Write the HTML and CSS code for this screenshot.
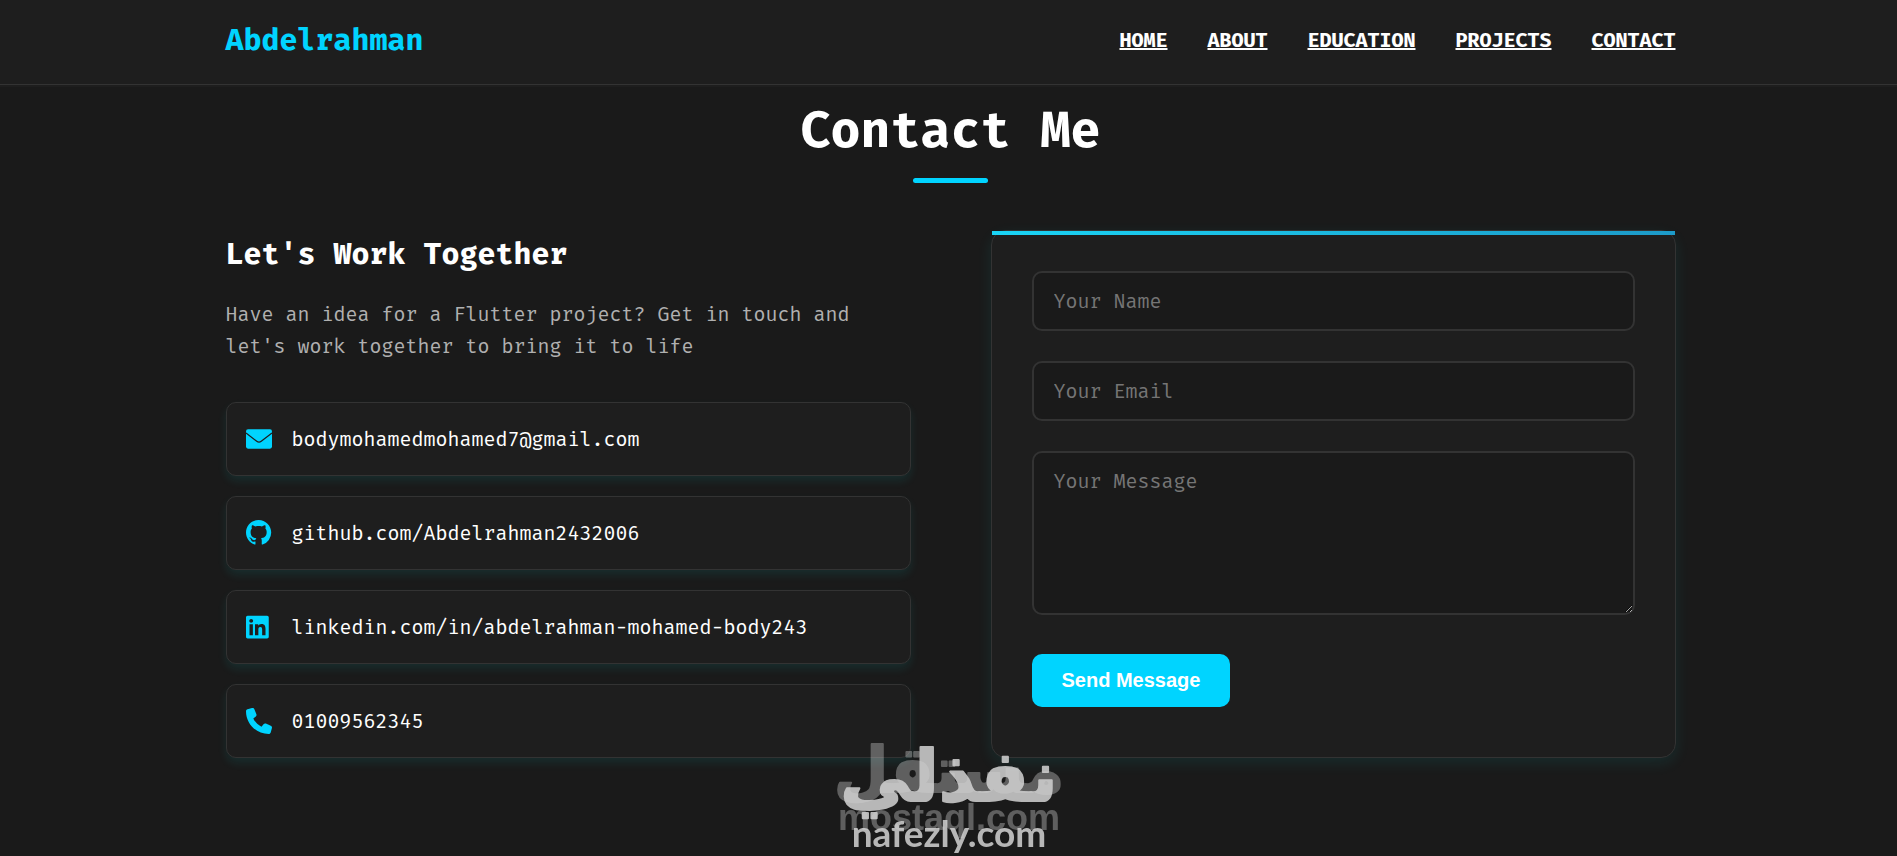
FILE: index.html
```html
<!DOCTYPE html>
<html lang="en">

<head>
	<meta charset="UTF-8">
	<meta name="viewport" content="width=device-width, initial-scale=1.0">
	<title>Abdelrahman | Contact</title>
	<link rel="stylesheet" href="styles.css">
</head>

<body>
	<!-- Header -->
	<header class="header">
		<div class="container header-content">
			<a href="#home" class="logo">Abdelrahman</a>
			<nav>
				<ul class="nav-links">
					<li><a href="#home">HOME</a></li>
					<li><a href="#about">ABOUT</a></li>
					<li><a href="#education">EDUCATION</a></li>
					<li><a href="#projects">PROJECTS</a></li>
					<li><a href="#contact">CONTACT</a></li>
				</ul>
			</nav>
		</div>
	</header>

	<!-- Contact Section -->
	<main>
		<section id="contact" class="container contact">
			<h2 class="section-title">Contact Me</h2>
			<div class="contact-content">
				<div class="contact-info">
					<h3>Let's Work Together</h3>
					<p>Have an idea for a Flutter project? Get in touch and let's work together to bring it to life</p>
					<div class="contact-items">
						<a class="contact-item" href="mailto:bodymohamedmohamed7@gmail.com">
							<svg class="icon" viewBox="0 0 512 512" aria-hidden="true"><rect x="0" y="66" width="512" height="380" rx="40"/><path class="flap" d="M0 136L212 302Q256 336 300 302L512 136"/></svg>
							<span>bodymohamedmohamed7@gmail.com</span>
						</a>
						<a class="contact-item" href="https://github.com/Abdelrahman2432006">
							<svg class="icon" viewBox="0 0 16.500 16.500" aria-hidden="true"><path d="M8 0C3.580 0 0 3.580 0 8c0 3.540 2.290 6.530 5.470 7.590.4.070.55-.17.55-.38 0-.19-.01-.82-.01-1.490-2.010.37-2.530-.49-2.690-.94-.09-.23-.48-.94-.82-1.130-.28-.15-.68-.52-.01-.53.63-.01 1.080.58 1.230.82.72 1.210 1.870.87 2.330.66.07-.52.28-.87.51-1.070-1.780-.2-3.640-.89-3.640-3.950 0-.87.31-1.590.82-2.150-.08-.2-.36-1.020.08-2.120 0 0 .67-.21 2.200.82.64-.18 1.320-.27 2-.27s1.360.09 2 .27c1.530-1.040 2.200-.82 2.200-.82.44 1.100.16 1.920.08 2.120.51.56.82 1.270.82 2.150 0 3.070-1.870 3.750-3.650 3.950.29.25.54.73.54 1.480 0 1.070-.01 1.930-.01 2.200 0 .21.15.46.55.38A8.010 8.010 0 0 0 16 8c0-4.420-3.580-8-8-8z"/></svg>
							<span>github.com/Abdelrahman2432006</span>
						</a>
						<a class="contact-item" href="https://linkedin.com/in/abdelrahman-mohamed-body243">
							<svg class="icon" viewBox="0 0 448 512" preserveAspectRatio="xMinYMid meet" aria-hidden="true"><path d="M416 32H31.900C14.300 32 0 46.500 0 64.300v383.400C0 465.500 14.300 480 31.900 480H416c17.600 0 32-14.500 32-32.300V64.300c0-17.800-14.400-32.300-32-32.300zM135.400 416H69V202.200h66.500V416zm-33.200-243c-21.300 0-38.500-17.300-38.500-38.500S80.900 96 102.200 96c21.200 0 38.500 17.300 38.500 38.500 0 21.300-17.200 38.500-38.500 38.500zm282.100 243h-66.400V312c0-24.800-.5-56.700-34.500-56.700-34.600 0-39.900 27-39.900 54.900V416h-66.400V202.200h63.700v29.200h.9c8.900-16.800 30.600-34.500 62.900-34.500 67.200 0 79.700 44.300 79.700 101.900V416z"/></svg>
							<span>linkedin.com/in/abdelrahman-mohamed-body243</span>
						</a>
						<a class="contact-item" href="tel:01009562345">
							<svg class="icon" viewBox="0 0 512 512" aria-hidden="true"><path d="M164.900 24.600c-7.700-18.600-28-28.500-47.400-23.200l-88 24C12.100 30.200 0 46 0 64c0 247.400 200.600 448 448 448 18 0 33.800-12.100 38.600-29.500l24-88c5.300-19.400-4.600-39.700-23.200-47.400l-96-40c-16.300-6.800-35.200-2.100-46.300 11.600L304.700 368C234.300 334.700 177.300 277.700 144 207.300L193.300 167c13.700-11.200 18.400-30 11.600-46.300l-40-96z"/></svg>
							<span>01009562345</span>
						</a>
					</div>
				</div>

				<form class="contact-form">
					<div class="form-group">
						<input type="text" id="name" aria-label="Your Name" placeholder="Your Name" required>
					</div>
					<div class="form-group">
						<input type="email" id="email" aria-label="Your Email" placeholder="Your Email" required>
					</div>
					<div class="form-group">
						<textarea id="message" aria-label="Your Message" placeholder="Your Message" required></textarea>
					</div>
					<button type="submit" class="btn">Send Message</button>
				</form>
			</div>
		</section>
	</main>

	<!-- Marks lying over the page -->
	<svg class="watermark" viewBox="0 0 280 146" aria-hidden="true">
		<g class="mark-back">
			<text class="mark-ar" x="139" y="82">مستقل</text>
			<text class="mark-en" x="139" y="120">mostaql.com</text>
		</g>
		<g class="mark-front">
			<text class="mark-ar" x="139" y="91">نفذلي</text>
			<text class="mark-en" x="139" y="137">nafezly.com</text>
		</g>
	</svg>
</body>

</html>
```
FILE: styles.css
```css
* {
	margin: 0;
	padding: 0;
	box-sizing: border-box;
}

body {
	font-family: "Fira Mono", "Fira Code", "DejaVu Sans Mono", monospace;
	font-size: 20px;
	line-height: 32px;
	background-color: #1a1a1a;
	color: #ffffff;
}

.container {
	max-width: 1500px;
	margin: 0 auto;
	padding: 0 23px 0 27px;
}

/* Header */
.header {
	padding: 16px 0 20px;
	background-color: #1e1e1e;
	border-bottom: 1px solid #333333;
	box-shadow: 0 2px 0 #1e1e1e;
}

.header-content {
	display: flex;
	justify-content: space-between;
	align-items: center;
}

.logo {
	font-size: 30px;
	line-height: 48px;
	font-weight: bold;
	color: #00d4ff;
	text-decoration: none;
}

.nav-links {
	display: flex;
	gap: 40px;
	list-style: none;
}

.nav-links a {
	color: #ffffff;
	font-weight: bold;
}

/* Contact */
.contact {
	padding-top: 15px;
	padding-bottom: 60px;
}

.section-title {
	font-size: 50px;
	line-height: 60px;
	text-align: center;
	margin-bottom: 47px;
}

.section-title::after {
	content: "";
	display: block;
	width: 75px;
	height: 5px;
	margin: 18px auto 0;
	background-color: #00d4ff;
	border-radius: 3px;
}

.contact-content {
	display: grid;
	grid-template-columns: 1fr 1fr;
	gap: 80px;
}

.contact-info h3 {
	font-size: 30px;
	line-height: 48px;
	margin-bottom: 20px;
}

.contact-info p {
	color: #b0b0b0;
	margin-bottom: 40px;
}

.contact-items {
	display: flex;
	flex-direction: column;
	gap: 20px;
}

.contact-item {
	display: flex;
	align-items: center;
	gap: 20px;
	padding: 20px 19px;
	background-color: #1e1e1e;
	border: 1px solid #333333;
	border-radius: 10px;
	box-shadow: 0 5px 10px rgba(0, 235, 235, 0.09);
	color: #ffffff;
	text-decoration: none;
}

.icon {
	width: 26px;
	height: 26px;
	flex-shrink: 0;
	fill: #00d4ff;
}

.icon .flap {
	fill: none;
	stroke: #1e1e1e;
	stroke-width: 24px;
}

/* Form */
.contact-form {
	position: relative;
	padding: 40px;
	background-color: #1e1e1e;
	border: 1px solid #333333;
	border-radius: 15px;
	box-shadow: 0 5px 15px rgba(0, 235, 235, 0.09);
}

.contact-form::before {
	content: "";
	position: absolute;
	top: 0;
	left: 0;
	right: 0;
	height: 4px;
	background: linear-gradient(90deg, #1ad4f5, #1d9ac8);
}

.form-group {
	display: flex;
	flex-direction: column;
	margin-bottom: 30px;
}

.form-group input,
.form-group textarea {
	width: 100%;
	padding: 12px 20px;
	background-color: #1a1a1a;
	border: 2px solid #333333;
	border-radius: 10px;
	color: #ffffff;
	font-family: inherit;
	font-size: 20px;
	line-height: 32px;
}

.form-group input {
	height: 60px;
}

.form-group textarea {
	height: 164px;
	resize: vertical;
}

.form-group ::placeholder {
	color: #757575;
}

.btn {
	margin-top: 9px;
	padding: 15px 30px;
	background-color: #00d4ff;
	border: none;
	border-radius: 10px;
	color: #ffffff;
	font-family: "Liberation Sans", Arial, sans-serif;
	font-size: 20px;
	line-height: 23px;
	font-weight: bold;
}

/* Watermark */
.watermark {
	position: fixed;
	left: 50%;
	bottom: 0;
	width: 280px;
	height: 146px;
	margin-left: -139px;
	pointer-events: none;
}

.watermark text {
	text-anchor: middle;
	font-weight: bold;
}

.mark-back {
	fill: #ffffff;
	opacity: 0.3;
}

.mark-front {
	fill: #d4d4d4;
	opacity: 0.85;
}

/* thick rounded strokes, as in the logos */
.mark-ar {
	font-family: "DejaVu Sans", sans-serif;
	stroke-width: 2px;
	stroke-linejoin: round;
}

.mark-back .mark-ar {
	font-size: 63px;
	stroke: #ffffff;
}

.mark-front .mark-ar {
	font-size: 71px;
	stroke: #d4d4d4;
}

.mark-back .mark-en {
	font-family: "Liberation Sans", Arial, sans-serif;
	font-size: 36px;
}

.mark-front .mark-en {
	font-family: Lato, sans-serif;
	font-size: 37px;
}
```
